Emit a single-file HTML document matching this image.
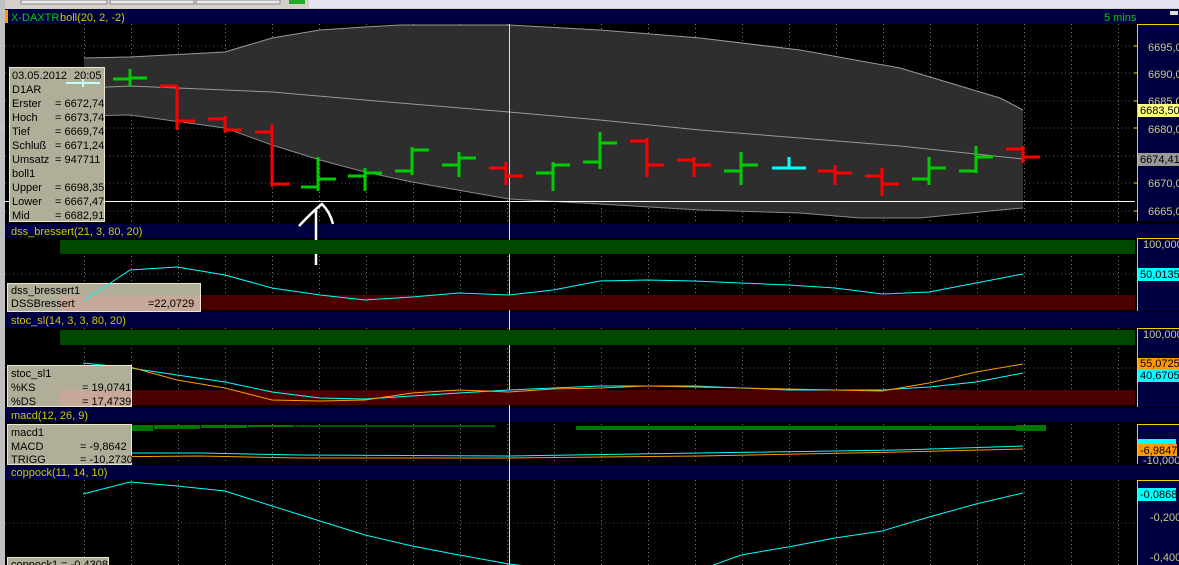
<!DOCTYPE html>
<html><head><meta charset="utf-8"><style>
body{margin:0;width:1179px;height:565px;overflow:hidden;background:#000;font-family:"Liberation Sans",sans-serif}
svg{display:block}
text{font-family:"Liberation Sans",sans-serif;font-size:11px}
</style></head><body>
<svg width="1179" height="565" viewBox="0 0 1179 565" xmlns="http://www.w3.org/2000/svg">
<defs>
<pattern id="vg" x="84" y="0" width="47" height="4" patternUnits="userSpaceOnUse"><rect x="0" y="0" width="1" height="1" fill="#777"/></pattern>
</defs>
<!-- toolbar -->
<rect x="0" y="0" width="1179" height="9" fill="#d4d0c8"/>
<rect x="21" y="0" width="86" height="4" fill="#e8e8e8" stroke="#888"/><rect x="110" y="0" width="84" height="4" fill="#e8e8e8" stroke="#888"/><rect x="196" y="0" width="84" height="4" fill="#e8e8e8" stroke="#888"/>
<rect x="289" y="0" width="16" height="4" fill="#2a2"/>
<rect x="309" y="0" width="870" height="8" fill="#e4e4f0"/>
<rect x="0" y="0" width="5" height="565" fill="#c0c0c0"/>
<!-- title bars -->
<rect x="5" y="9" width="1174" height="15" fill="#000040"/>
<rect x="5" y="10" width="3" height="13" fill="#f90"/>
<text x="11" y="21" fill="#0c0">X-DAXTR</text><text x="60" y="21" fill="#cc0">boll(20, 2, -2)</text>
<text x="1104" y="21" fill="#0c0">5 mins</text>
<rect x="1170" y="11" width="8" height="4" fill="#ddd"/>
<rect x="5" y="224" width="1174" height="14" fill="#000040"/><text x="11" y="235" fill="#cc0">dss_bressert(21, 3, 80, 20)</text>
<rect x="5" y="312" width="1174" height="16" fill="#000040"/><text x="11" y="324" fill="#cc0">stoc_sl(14, 3, 3, 80, 20)</text>
<rect x="5" y="408" width="1174" height="14" fill="#000040"/><text x="11" y="419" fill="#cc0">macd(12, 26, 9)</text>
<rect x="5" y="465" width="1174" height="15" fill="#000040"/><text x="11" y="476" fill="#cc0">coppock(11, 14, 10)</text>
<!-- axis panels -->
<rect x="1137" y="24" width="42" height="197" fill="#000040"/><rect x="1137" y="24" width="1" height="197" fill="#fc0"/><rect x="1137" y="24" width="42" height="1" fill="#fc0"/>
<rect x="1137" y="238" width="42" height="73" fill="#000040"/><rect x="1137" y="238" width="1" height="73" fill="#fc0"/><rect x="1137" y="238" width="42" height="1" fill="#fc0"/>
<rect x="1137" y="328" width="42" height="79" fill="#000040"/><rect x="1137" y="328" width="1" height="79" fill="#fc0"/><rect x="1137" y="328" width="42" height="1" fill="#fc0"/>
<rect x="1137" y="424" width="42" height="40" fill="#000040"/><rect x="1137" y="424" width="1" height="40" fill="#fc0"/><rect x="1137" y="424" width="42" height="1" fill="#fc0"/>
<rect x="1137" y="480" width="42" height="85" fill="#000040"/><rect x="1137" y="480" width="1" height="85" fill="#fc0"/><rect x="1137" y="480" width="42" height="1" fill="#fc0"/>
<g fill="#cc8">
<text x="1148" y="51">6695,0</text><text x="1148" y="78">6690,0</text><text x="1148" y="105">6685,0</text><text x="1148" y="133">6680,0</text><text x="1148" y="187">6670,0</text><text x="1148" y="215">6665,0</text>
<text x="1143" y="248">100,000</text><text x="1143" y="338">100,000</text>
<text x="1150" y="521">-0,200</text><text x="1150" y="561">-0,400</text>
</g>
<rect x="1138" y="104" width="41" height="13" fill="#ff8"/><text x="1140" y="114" fill="#000">6683,50</text>
<rect x="1138" y="153" width="41" height="13" fill="#999"/><text x="1140" y="163" fill="#000">6674,41</text>
<rect x="1138" y="268" width="41" height="13" fill="#0ff"/><text x="1140" y="278" fill="#000">50,0135</text>
<rect x="1138" y="358" width="41" height="12" fill="#f90"/><text x="1140" y="367" fill="#000">55,0725</text>
<rect x="1138" y="369" width="41" height="13" fill="#0ff"/><text x="1140" y="379" fill="#000">40,6705</text>
<rect x="1138" y="439" width="38" height="8" fill="#0ff"/>
<rect x="1138" y="444" width="39" height="12" fill="#f90"/><text x="1140" y="454" fill="#000">-6,9847</text>
<text x="1143" y="464" fill="#cc8">-10,000</text>
<rect x="1138" y="488" width="38" height="13" fill="#0ff"/><text x="1140" y="498" fill="#000">-0,0868</text>
<!-- vertical grid -->
<rect x="84" y="24" width="1046" height="197" fill="url(#vg)"/>
<rect x="84" y="238" width="1046" height="73" fill="url(#vg)"/>
<rect x="84" y="328" width="1046" height="79" fill="url(#vg)"/>
<rect x="84" y="422" width="1046" height="42" fill="url(#vg)"/>
<rect x="84" y="480" width="1046" height="85" fill="url(#vg)"/>
<!-- horizontal grid -->
<g stroke="#555" stroke-dasharray="1,3">
<line x1="5" x2="1135" y1="46" y2="46"/><line x1="5" x2="1135" y1="73" y2="73"/><line x1="5" x2="1135" y1="101" y2="101"/><line x1="5" x2="1135" y1="128" y2="128"/><line x1="5" x2="1135" y1="156" y2="156"/><line x1="5" x2="1135" y1="183" y2="183"/><line x1="5" x2="1135" y1="211" y2="211"/>
<line x1="5" x2="1135" y1="274" y2="274"/><line x1="5" x2="1135" y1="368" y2="368"/><line x1="5" x2="1135" y1="523" y2="523"/>
</g>
<!-- bollinger -->
<polygon fill="#2e2e2e" points="84,58 130,57 225,52 272,38 320,30 365,27 400,25 509,25 600,30 700,38 800,50 900,68 1000,98 1023,110 1023,208 1000,210 920,218 860,218 800,213 700,210 600,204 509,199 412,182 365,172 320,160 272,145 225,128 130,115 84,116"/>
<polyline fill="none" stroke="#999" points="84,58 130,57 225,52 272,38 320,30 365,27 400,25 509,25 600,30 700,38 800,50 900,68 1000,98 1023,110"/>
<polyline fill="none" stroke="#888" points="1023,208 1000,210 920,218 860,218 800,213 700,210 600,204 509,199 412,182 365,172 320,160 272,145 225,128 130,115 84,116"/>
<polyline fill="none" stroke="#999" points="84,88 130,86 272,92 400,103 509,112 600,120 700,130 800,138 900,146 1023,159"/>
<line x1="5" x2="1135" y1="201.5" y2="201.5" stroke="#fff"/>
<line x1="509.5" x2="509.5" y1="24" y2="565" stroke="#ddd"/>
<!-- bars -->
<g stroke-width="3">
<g stroke="#0c0"><path d="M130 69V86M113 79H130M130 78H147"/><path d="M318 157V191M301 187H318M318 179H336"/><path d="M365 168V191M348 176H365M365 173H382"/><path d="M412 147V175M395 171H412M412 150H429"/><path d="M459 152V177M442 165H459M459 158H476"/><path d="M553 162V191M536 173H553M553 165H570"/><path d="M600 132V169M583 162H600M600 143H617"/><path d="M741 152V185M724 171H741M741 165H758"/><path d="M929 157V185M912 179H929M929 168H946"/><path d="M976 146V173M959 171H976M976 157H993"/></g>
<g stroke="#f00"><path d="M177 86V130M160 86H177M177 121H195"/><path d="M225 116V133M208 119H225M225 130H242"/><path d="M272 124V187M255 132H272M272 184H289"/><path d="M506 162V185M489 168H506M506 176H523"/><path d="M647 138V177M630 141H647M647 165H664"/><path d="M694 157V177M677 160H694M694 165H711"/><path d="M835 165V185M818 171H835M835 173H852"/><path d="M882 168V196M865 176H882M882 184H899"/><path d="M1023 146V163M1006 149H1023M1023 157H1040"/></g>
<path stroke="#0ff" d="M789 157V168M772 168H806"/>
</g>
<!-- arrow -->
<path d="M316 265V210M299 226Q312 212 322 204Q330 212 333 224" stroke="#fff" stroke-width="2.5" fill="none"/>
<!-- main info box -->
<rect x="9.5" y="67.5" width="95" height="154" fill="#b0ae98" stroke="#e8e8d0"/>
<path d="M66 83H100M83 79V87" stroke="#bff" stroke-width="2"/>
<g fill="#000">
<text x="12" y="79">03.05.2012</text><text x="74" y="79">20:05</text>
<text x="12" y="93">D1AR</text>
<text x="12" y="107">Erster</text><text x="55" y="107">= 6672,74</text>
<text x="12" y="121">Hoch</text><text x="55" y="121">= 6673,74</text>
<text x="12" y="135">Tief</text><text x="55" y="135">= 6669,74</text>
<text x="12" y="149">Schluß</text><text x="55" y="149">= 6671,24</text>
<text x="12" y="163">Umsatz</text><text x="55" y="163">=  947711</text>
<text x="12" y="177">boll1</text>
<text x="12" y="191">Upper</text><text x="55" y="191">= 6698,35</text>
<text x="12" y="205">Lower</text><text x="55" y="205">= 6667,47</text>
<text x="12" y="219">Mid</text><text x="55" y="219">= 6682,91</text>
</g>
<!-- dss panel -->
<rect x="60" y="240" width="1075" height="14" fill="#004800"/>
<rect x="60" y="295" width="1075" height="15" fill="#4a0000"/>
<rect x="7.5" y="283.5" width="193" height="28" fill="#b0ae98" stroke="#e8e8d0"/>
<rect x="60" y="296" width="140" height="15" fill="#c8a898"/>
<polyline fill="none" stroke="#0ff" points="83,301 130,270 177,267 225,275 272,288 320,295 365,300 412,297 459,293 509,295 553,290 600,281 647,280 694,281 741,283 788,285 835,288 882,294 929,292 976,283 1023,274"/>
<text x="11" y="294" fill="#000">dss_bressert1</text><text x="11" y="307" fill="#000">DSSBressert</text><text x="148" y="307" fill="#000">=22,0729</text>
<!-- stoc panel -->
<rect x="60" y="330" width="1075" height="15" fill="#004800"/>
<rect x="60" y="390" width="1075" height="15" fill="#4a0000"/>
<polyline fill="none" stroke="#0ff" points="83,363 130,368 177,375 225,382 272,392 320,398 365,399 412,396 459,393 509,390 553,388 600,386 647,386 694,386 741,388 788,390 835,390 882,390 929,387 976,382 1023,373"/>
<polyline fill="none" stroke="#f90" points="83,367 130,367 177,380 225,388 272,400 320,401 365,400 412,393 459,390 509,392 553,389 600,388 647,386 694,387 741,388 788,389 835,390 882,391 929,383 976,372 1023,364"/>
<rect x="7.5" y="365.5" width="124" height="41" fill="#b0ae98" stroke="#e8e8d0"/>
<rect x="60" y="390" width="71" height="16" fill="#c8a898"/>
<text x="11" y="377" fill="#000">stoc_sl1</text><text x="11" y="391" fill="#000">%KS</text><text x="82" y="391" fill="#000">= 19,0741</text><text x="11" y="405" fill="#000">%DS</text><text x="82" y="405" fill="#000">= 17,4739</text>
<!-- macd panel -->
<g fill="#070">
<rect x="60" y="425" width="93" height="6"/><rect x="154" y="425" width="46" height="4"/><rect x="201" y="425" width="46" height="3"/><rect x="248" y="425" width="46" height="2"/><rect x="295" y="425" width="200" height="2" fill="#050"/>
<rect x="576" y="426" width="440" height="4"/><rect x="1016" y="425" width="30" height="6"/>
</g>
<polyline fill="none" stroke="#0ff" points="83,453 200,453 300,455 509,456 700,453 900,450 1023,446"/>
<polyline fill="none" stroke="#f90" points="83,457 200,456 300,458 509,458 700,456 900,452 1023,449"/>
<rect x="7.5" y="424.5" width="124" height="40" fill="#b0ae98" stroke="#e8e8d0"/>
<text x="11" y="436" fill="#000">macd1</text><text x="11" y="450" fill="#000">MACD</text><text x="80" y="450" fill="#000">=   -9,8642</text><text x="11" y="463" fill="#000">TRIGG</text><text x="80" y="463" fill="#000">= -10,2730</text>
<!-- coppock -->
<polyline fill="none" stroke="#0ff" points="83,494 130,482 177,486 225,491 272,506 320,521 365,535 412,546 459,555 509,564 560,570 700,570 741,555 788,547 835,538 882,531 929,517 976,504 1023,493"/>
<rect x="7.5" y="557.5" width="101" height="10" fill="#b0ae98" stroke="#e8e8d0"/>
<text x="11" y="568" fill="#000">coppock1 = -0,4308</text>
<!-- axis ticks -->
<g stroke="#fc0"><line x1="1134" x2="1137" y1="46" y2="46"/><line x1="1134" x2="1137" y1="73" y2="73"/><line x1="1134" x2="1137" y1="101" y2="101"/><line x1="1134" x2="1137" y1="128" y2="128"/><line x1="1134" x2="1137" y1="183" y2="183"/><line x1="1134" x2="1137" y1="211" y2="211"/></g>
</svg>
</body></html>
